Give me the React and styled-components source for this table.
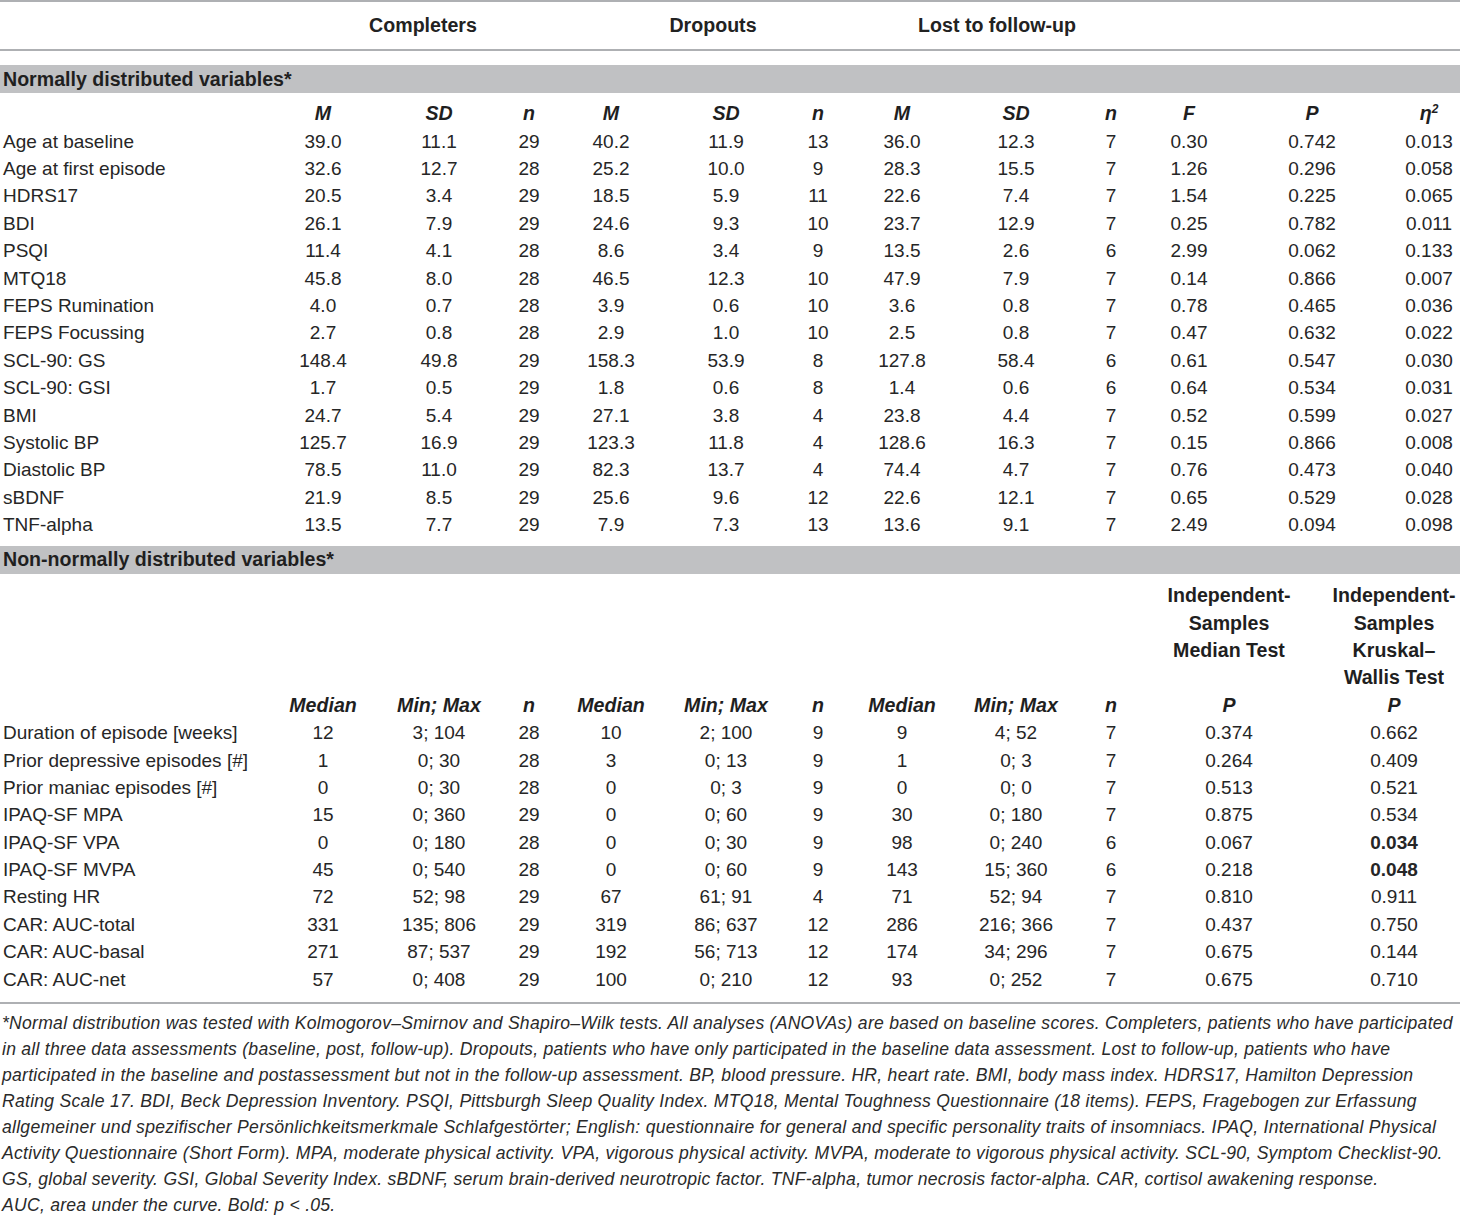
import React from 'react';
import styled, { createGlobalStyle } from 'styled-components';

const Global = createGlobalStyle`
  html, body { margin: 0; padding: 0; background: #ffffff; }
  body {
    font-family: "Liberation Sans", Arial, Helvetica, sans-serif;
    color: #262626;
    -webkit-font-smoothing: antialiased;
  }
`;

const COLS_NORMAL = '262px 122px 110px 70px 94px 136px 48px 120px 108px 82px 74px 172px 62px';
const COLS_NON = '262px 122px 110px 70px 94px 136px 48px 120px 108px 82px 154px 154px';
const COLS_GROUP = '262px 322px 258px 310px 1fr';
const ROW_H = 27.4;

const Table = styled.div`
  width: 1460px;
  display: flex;
  flex-direction: column;
`;

const Rule = styled.div`
  height: 2px;
  background: #aeb0b3;
  margin-top: ${(p) => p.$mt || 0}px;
`;

const GroupRow = styled.div`
  display: grid;
  grid-template-columns: ${COLS_GROUP};
  height: 47px;
  align-items: center;
`;

const GroupHead = styled.div`
  text-align: center;
  font-weight: 700;
  font-size: 19.6px;
  color: #222;
`;

const Band = styled.div`
  height: 28px;
  background: #c0c1c3;
  display: flex;
  align-items: center;
  padding-left: 3px;
  font-weight: 700;
  font-size: 19.6px;
  color: #1f1f1f;
  margin-top: ${(p) => p.$mt || 0}px;
`;

const Section = styled.div`
  display: flex;
  flex-direction: column;
  padding-top: ${(p) => p.$pt || 0}px;
  padding-bottom: ${(p) => p.$pb || 0}px;
`;

const Row = styled.div`
  display: grid;
  grid-template-columns: ${(p) => p.$cols};
  height: ${ROW_H}px;
  align-items: center;
  font-size: 19px;
  line-height: ${ROW_H}px;
`;

const Label = styled.div`
  padding-left: 3px;
  white-space: nowrap;
`;

const Cell = styled.div`
  text-align: center;
  white-space: nowrap;
  font-weight: ${(p) => (p.$bold ? 700 : 400)};
  font-style: ${(p) => (p.$italic ? 'italic' : 'normal')};
  padding-left: ${(p) => p.$shift || 0}px;
`;

const HeadCell = styled(Cell).attrs({ $bold: true, $italic: true })`
  font-size: 19.6px;
  color: #1f1f1f;
`;

const Sup = styled.sup`
  font-size: 12px;
  vertical-align: 7px;
  line-height: 0;
`;

const MultiRow = styled.div`
  display: grid;
  grid-template-columns: ${COLS_NON};
  height: ${ROW_H * 4}px;
  align-items: start;
`;

const MultiHead = styled.div`
  grid-column: ${(p) => p.$col};
  text-align: center;
  font-weight: 700;
  font-size: 19.6px;
  line-height: ${ROW_H}px;
  color: #1f1f1f;
  padding-left: ${(p) => p.$shift || 0}px;
`;

const Footnote = styled.div`
  margin-top: 6px;
  font-style: italic;
  font-size: 17.6px;
  line-height: 26px;
  color: #2a2a2a;
  padding-left: 2px;
`;

const FootLine = styled.div`
  white-space: nowrap;
  letter-spacing: 0.25px;
`;

const normalRows = [
  ['Age at baseline', '39.0', '11.1', '29', '40.2', '11.9', '13', '36.0', '12.3', '7', '0.30', '0.742', '0.013'],
  ['Age at first episode', '32.6', '12.7', '28', '25.2', '10.0', '9', '28.3', '15.5', '7', '1.26', '0.296', '0.058'],
  ['HDRS17', '20.5', '3.4', '29', '18.5', '5.9', '11', '22.6', '7.4', '7', '1.54', '0.225', '0.065'],
  ['BDI', '26.1', '7.9', '29', '24.6', '9.3', '10', '23.7', '12.9', '7', '0.25', '0.782', '0.011'],
  ['PSQI', '11.4', '4.1', '28', '8.6', '3.4', '9', '13.5', '2.6', '6', '2.99', '0.062', '0.133'],
  ['MTQ18', '45.8', '8.0', '28', '46.5', '12.3', '10', '47.9', '7.9', '7', '0.14', '0.866', '0.007'],
  ['FEPS Rumination', '4.0', '0.7', '28', '3.9', '0.6', '10', '3.6', '0.8', '7', '0.78', '0.465', '0.036'],
  ['FEPS Focussing', '2.7', '0.8', '28', '2.9', '1.0', '10', '2.5', '0.8', '7', '0.47', '0.632', '0.022'],
  ['SCL-90: GS', '148.4', '49.8', '29', '158.3', '53.9', '8', '127.8', '58.4', '6', '0.61', '0.547', '0.030'],
  ['SCL-90: GSI', '1.7', '0.5', '29', '1.8', '0.6', '8', '1.4', '0.6', '6', '0.64', '0.534', '0.031'],
  ['BMI', '24.7', '5.4', '29', '27.1', '3.8', '4', '23.8', '4.4', '7', '0.52', '0.599', '0.027'],
  ['Systolic BP', '125.7', '16.9', '29', '123.3', '11.8', '4', '128.6', '16.3', '7', '0.15', '0.866', '0.008'],
  ['Diastolic BP', '78.5', '11.0', '29', '82.3', '13.7', '4', '74.4', '4.7', '7', '0.76', '0.473', '0.040'],
  ['sBDNF', '21.9', '8.5', '29', '25.6', '9.6', '12', '22.6', '12.1', '7', '0.65', '0.529', '0.028'],
  ['TNF-alpha', '13.5', '7.7', '29', '7.9', '7.3', '13', '13.6', '9.1', '7', '2.49', '0.094', '0.098'],
];

const nonRows = [
  ['Duration of episode [weeks]', '12', '3; 104', '28', '10', '2; 100', '9', '9', '4; 52', '7', '0.374', '0.662'],
  ['Prior depressive episodes [#]', '1', '0; 30', '28', '3', '0; 13', '9', '1', '0; 3', '7', '0.264', '0.409'],
  ['Prior maniac episodes [#]', '0', '0; 30', '28', '0', '0; 3', '9', '0', '0; 0', '7', '0.513', '0.521'],
  ['IPAQ-SF MPA', '15', '0; 360', '29', '0', '0; 60', '9', '30', '0; 180', '7', '0.875', '0.534'],
  ['IPAQ-SF VPA', '0', '0; 180', '28', '0', '0; 30', '9', '98', '0; 240', '6', '0.067', '*0.034'],
  ['IPAQ-SF MVPA', '45', '0; 540', '28', '0', '0; 60', '9', '143', '15; 360', '6', '0.218', '*0.048'],
  ['Resting HR', '72', '52; 98', '29', '67', '61; 91', '4', '71', '52; 94', '7', '0.810', '0.911'],
  ['CAR: AUC-total', '331', '135; 806', '29', '319', '86; 637', '12', '286', '216; 366', '7', '0.437', '0.750'],
  ['CAR: AUC-basal', '271', '87; 537', '29', '192', '56; 713', '12', '174', '34; 296', '7', '0.675', '0.144'],
  ['CAR: AUC-net', '57', '0; 408', '29', '100', '0; 210', '12', '93', '0; 252', '7', '0.675', '0.710'],
];

const footLines = [
  '*Normal distribution was tested with Kolmogorov–Smirnov and Shapiro–Wilk tests. All analyses (ANOVAs) are based on baseline scores. Completers, patients who have participated',
  'in all three data assessments (baseline, post, follow-up). Dropouts, patients who have only participated in the baseline data assessment. Lost to follow-up, patients who have',
  'participated in the baseline and postassessment but not in the follow-up assessment. BP, blood pressure. HR, heart rate. BMI, body mass index. HDRS17, Hamilton Depression',
  'Rating Scale 17. BDI, Beck Depression Inventory. PSQI, Pittsburgh Sleep Quality Index. MTQ18, Mental Toughness Questionnaire (18 items). FEPS, Fragebogen zur Erfassung',
  'allgemeiner und spezifischer Persönlichkeitsmerkmale Schlafgestörter; English: questionnaire for general and specific personality traits of insomniacs. IPAQ, International Physical',
  'Activity Questionnaire (Short Form). MPA, moderate physical activity. VPA, vigorous physical activity. MVPA, moderate to vigorous physical activity. SCL-90, Symptom Checklist-90.',
  'GS, global severity. GSI, Global Severity Index. sBDNF, serum brain-derived neurotropic factor. TNF-alpha, tumor necrosis factor-alpha. CAR, cortisol awakening response.',
  'AUC, area under the curve. Bold: p < .05.',
];

export default function App() {
  return (
    <>
      <Global />
      <Table>
        <Rule />
        <GroupRow>
          <div />
          <GroupHead>Completers</GroupHead>
          <GroupHead>Dropouts</GroupHead>
          <GroupHead>Lost to follow-up</GroupHead>
          <div />
        </GroupRow>
        <Rule />
        <Band $mt={14}>Normally distributed variables*</Band>
        <Section $pt={7.3} $pb={7.3}>
          <Row $cols={COLS_NORMAL}>
            <Label />
            {['M', 'SD', 'n', 'M', 'SD', 'n', 'M', 'SD', 'n', 'F', 'P'].map((h, i) => (
              <HeadCell key={i}>{h}</HeadCell>
            ))}
            <HeadCell>
              η<Sup>2</Sup>
            </HeadCell>
          </Row>
          {normalRows.map((r) => (
            <Row key={r[0]} $cols={COLS_NORMAL}>
              <Label>{r[0]}</Label>
              {r.slice(1).map((v, i) => (
                <Cell key={i}>{v}</Cell>
              ))}
            </Row>
          ))}
        </Section>
        <Band>Non-normally distributed variables*</Band>
        <Section $pt={8.3} $pb={9.4}>
          <MultiRow>
            <MultiHead $col="11">
              Independent-
              <br />
              Samples
              <br />
              Median Test
            </MultiHead>
            <MultiHead $col="12" $shift={22}>
              Independent-
              <br />
              Samples
              <br />
              Kruskal–
              <br />
              Wallis Test
            </MultiHead>
          </MultiRow>
          <Row $cols={COLS_NON}>
            <Label />
            {['Median', 'Min; Max', 'n', 'Median', 'Min; Max', 'n', 'Median', 'Min; Max', 'n', 'P'].map((h, i) => (
              <HeadCell key={i}>{h}</HeadCell>
            ))}
            <HeadCell $shift={22}>P</HeadCell>
          </Row>
          {nonRows.map((r) => (
            <Row key={r[0]} $cols={COLS_NON}>
              <Label>{r[0]}</Label>
              {r.slice(1).map((v, i) => {
                const bold = v.startsWith('*');
                const text = bold ? v.slice(1) : v;
                return (
                  <Cell key={i} $bold={bold} $shift={i === 10 ? 22 : 0}>
                    {text}
                  </Cell>
                );
              })}
            </Row>
          ))}
        </Section>
        <Rule />
        <Footnote>
          {footLines.map((l, i) => (
            <FootLine key={i}>{l}</FootLine>
          ))}
        </Footnote>
      </Table>
    </>
  );
}
